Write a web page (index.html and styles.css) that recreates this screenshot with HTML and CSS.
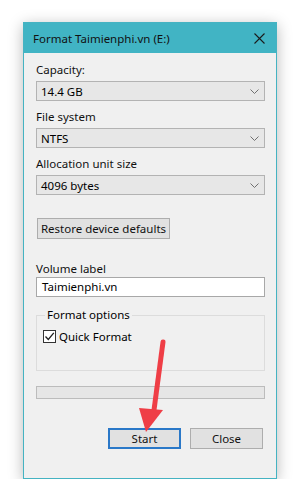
FILE: index.html
```html
<!DOCTYPE html>
<html lang="en">
<head>
    <meta charset="UTF-8">
    <meta name="viewport" content="width=device-width, initial-scale=1.0">
    <title>Format Taimienphi.vn (E:)</title>
    <link rel="stylesheet" href="styles.css">
</head>
<body>
    <div class="window">
        <div class="titlebar">
            <span class="title">Format Taimienphi.vn (E:)</span>
            <svg class="close-x" width="11" height="11" viewBox="0 0 11 11">
                <path d="M0.5 0.5 L10.5 10.5 M10.5 0.5 L0.5 10.5" stroke="#1b1b1b" stroke-width="1.1" fill="none"/>
            </svg>
        </div>

        <div class="content">
            <div class="field">
                <label>Capacity:</label>
                <div class="combo">
                    <span>14.4 GB</span>
                    <svg class="chevron" width="9" height="5" viewBox="0 0 9 5"><path d="M0.5 0.5 L4.5 4.5 L8.5 0.5" stroke="#707070" fill="none"/></svg>
                </div>
            </div>

            <div class="field">
                <label>File system</label>
                <div class="combo">
                    <span>NTFS</span>
                    <svg class="chevron" width="9" height="5" viewBox="0 0 9 5"><path d="M0.5 0.5 L4.5 4.5 L8.5 0.5" stroke="#707070" fill="none"/></svg>
                </div>
            </div>

            <div class="field">
                <label>Allocation unit size</label>
                <div class="combo">
                    <span>4096 bytes</span>
                    <svg class="chevron" width="9" height="5" viewBox="0 0 9 5"><path d="M0.5 0.5 L4.5 4.5 L8.5 0.5" stroke="#707070" fill="none"/></svg>
                </div>
            </div>

            <button class="btn restore">Restore device defaults</button>

            <div class="field volume">
                <label>Volume label</label>
                <div class="textbox">Taimienphi.vn</div>
            </div>

            <fieldset class="group">
                <legend>Format options</legend>
                <div class="check-row">
                    <span class="checkbox">
                        <svg width="11" height="11" viewBox="0 0 11 11"><path d="M1.5 5.5 L4.3 8.5 L9.8 1.8" stroke="#1e1e1e" stroke-width="1.3" fill="none"/></svg>
                    </span>
                    <span>Quick Format</span>
                </div>
            </fieldset>

            <div class="progress"></div>

            <div class="actions">
                <button class="btn default">Start</button>
                <button class="btn">Close</button>
            </div>
        </div>

        <!-- fleche rouge par-dessus -->
        <svg class="arrow" width="40" height="100" viewBox="0 0 40 100">
            <path d="M26 4 L17 72" stroke="#ef3e46" stroke-width="5" stroke-linecap="round" fill="none"/>
            <polygon points="2,70 26,72 9,94" fill="#ef3e46"/>
        </svg>
    </div>
</body>
</html>
```

FILE: styles.css
```css
* {
    margin: 0;
    padding: 0;
    box-sizing: border-box;
}

body {
    font-family: "Noto Sans", "Open Sans", sans-serif;
    font-size: 11.5px;
    color: #000;
    background: #fff;
    padding: 22px 0 0 23px;
}

.window {
    position: relative;
    width: 254px;
    height: 457px;
    background: #f0f0f0;
    border: 1px solid #45b3c2;
    box-shadow: 0 3px 14px rgba(0, 0, 0, 0.28);
}

.titlebar {
    height: 30px;
    background: #41b4c4;
    display: flex;
    align-items: center;
    justify-content: space-between;
    padding: 0 11px 0 9px;
}

.title {
    font-size: 11.5px;
    color: #111;
}

.content {
    padding: 9px 11px 0 12px;
}

.field {
    margin-bottom: 8px;
}

label {
    display: block;
    height: 16px;
    line-height: 16px;
    margin-bottom: 3px;
    color: #111;
}

.combo {
    height: 20px;
    background: #e7e7e7;
    border: 1px solid #b3b3b3;
    display: flex;
    align-items: center;
    justify-content: space-between;
    padding: 0 4px 0 4px;
}

.chevron {
    margin-right: 1px;
}

.btn {
    font-family: inherit;
    font-size: 11.5px;
    color: #111;
    background: #e1e1e1;
    border: 1px solid #adadad;
    height: 21px;
    width: 73px;
}

.restore {
    width: 133px;
    margin: 15px 0 0 1px;
}

.volume {
    margin-top: 22px;
    margin-bottom: 0;
}

.volume label {
    margin-bottom: 0;
}

.textbox {
    height: 20px;
    line-height: 18px;
    background: #fff;
    border: 1px solid #a8a8a8;
    padding-left: 5px;
}

.group {
    margin-top: 10px;
    height: 64px;
    border: 1px solid #dcdcdc;
    padding: 0 7px;
}

.group legend {
    padding: 0 2px;
    margin-left: 1px;
    line-height: 16px;
}

.check-row {
    display: flex;
    align-items: center;
    gap: 3px;
    margin-top: 6px;
    margin-left: -1px;
}

.checkbox {
    width: 13px;
    height: 13px;
    border: 1px solid #333;
    background: #fff;
    display: flex;
    align-items: center;
    justify-content: center;
}

.progress {
    margin-top: 15px;
    height: 13px;
    background: #e6e6e6;
    border: 1px solid #bcbcbc;
}

.actions {
    display: flex;
    justify-content: flex-end;
    gap: 9px;
    margin-top: 29px;
    padding-right: 2px;
}

.btn.default {
    border: 2px solid #2a78c8;
}

.arrow {
    position: absolute;
    left: 113px;
    top: 315px;
}
```
